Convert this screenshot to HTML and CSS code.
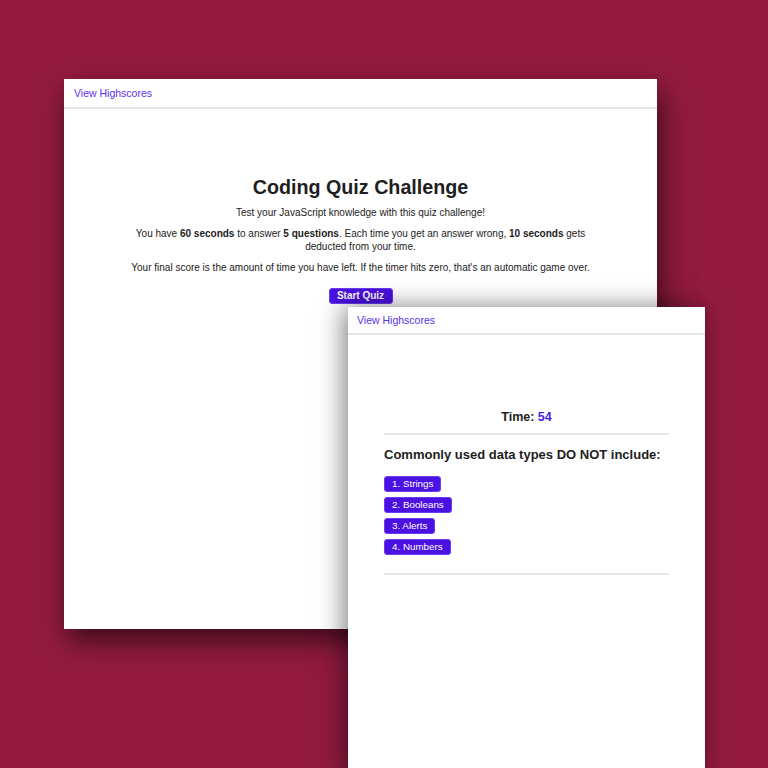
FILE: index.html
```html
<!DOCTYPE html>
<html lang="en">
<head>
<meta charset="utf-8">
<title>Coding Quiz Challenge</title>
<link rel="stylesheet" href="styles.css">
</head>
<body>
<div class="stage">
  <section class="window window-start">
    <header class="win-header"><a class="hs-link" href="#">View Highscores</a></header>
    <main class="start-main">
      <h1 class="title">Coding Quiz Challenge</h1>
      <p class="text">Test your JavaScript knowledge with this quiz challenge!</p>
      <p class="text">You have <b>60 seconds</b> to answer <b>5 questions</b>. Each time you get an answer wrong, <b>10 seconds</b> gets<br><span>deducted from your time.</span></p>
      <p class="text">Your final score is the amount of time you have left. If the timer hits zero, that's an automatic game over.</p>
      <button class="btn btn-start">Start Quiz</button>
    </main>
  </section>
  <section class="window window-quiz">
    <header class="win-header"><a class="hs-link" href="#">View Highscores</a></header>
    <main class="quiz-main">
      <div class="timer">Time: <span class="time-val">54</span></div>
      <hr class="rule">
      <h2 class="question">Commonly used data types DO NOT include:</h2>
      <div class="answers">
        <button class="btn btn-ans">1. Strings</button>
        <button class="btn btn-ans">2. Booleans</button>
        <button class="btn btn-ans">3. Alerts</button>
        <button class="btn btn-ans">4. Numbers</button>
      </div>
      <hr class="rule rule-bottom">
    </main>
  </section>
</div>
</body>
</html>
```
FILE: styles.css
```css
html, body {
  margin: 0;
  padding: 0;
}
body {
  background: #931b40;
  font-family: "Liberation Sans", Arial, sans-serif;
  color: #222;
  width: 768px;
  height: 768px;
  overflow: hidden;
}
.stage {
  position: relative;
  width: 768px;
  height: 768px;
}
.window {
  position: absolute;
  background: #fff;
}
.window-start {
  left: 64px;
  top: 79px;
  width: 593px;
  height: 550px;
  box-shadow: 4px 12px 26px rgba(0, 0, 0, 0.6);
}
.window-quiz {
  left: 348px;
  top: 307px;
  width: 357px;
  height: 470px;
  box-shadow: -4px 0 24px rgba(0, 0, 0, 0.5);
}
.win-header {
  height: 28px;
  border-bottom: 2px solid #e6e6e6;
  display: flex;
  align-items: center;
  padding-left: 10px;
}
.window-quiz .win-header {
  padding-left: 9px;
  height: 26px;
}
.hs-link {
  color: #5b2ff0;
  text-decoration: none;
  font-size: 10.5px;
}
.start-main {
  display: flex;
  flex-direction: column;
  align-items: center;
  padding: 66px 60px 0;
  text-align: center;
}
.title {
  margin: 0;
  font-size: 19.7px;
  line-height: 24px;
  font-weight: bold;
  color: #1e1e1e;
}
.text {
  margin: 7px 0 0;
  font-size: 10px;
  line-height: 13px;
  max-width: 462px;
}
.text + .text {
  margin-top: 8px;
}
.btn {
  font-family: "Liberation Sans", Arial, sans-serif;
  background: #4b10e2;
  color: #fff;
  border: 1px solid #6a3cf0;
  border-radius: 3px;
  cursor: pointer;
}
.btn-start {
  margin-top: 14px;
  width: 64px;
  height: 16px;
  padding: 0;
  font-size: 10px;
  font-weight: bold;
  line-height: 14px;
}
.quiz-main {
  padding: 74px 36px 0;
}
.timer {
  text-align: center;
  font-weight: bold;
  font-size: 12.5px;
  line-height: 16px;
  color: #1e1e1e;
}
.time-val {
  color: #4a1ee0;
}
.rule {
  margin: 8px 0 0;
  border: 0;
  height: 2px;
  background: #e6e6e6;
}
.question {
  margin: 12px 0 0;
  font-size: 13px;
  line-height: 16px;
  font-weight: bold;
  color: #1e1e1e;
}
.answers {
  margin-top: 13px;
  display: flex;
  flex-direction: column;
  align-items: flex-start;
  gap: 5px;
}
.btn-ans {
  height: 16px;
  padding: 0 7px;
  font-size: 9.8px;
  line-height: 14px;
}
.rule-bottom {
  margin-top: 18px;
}
```
